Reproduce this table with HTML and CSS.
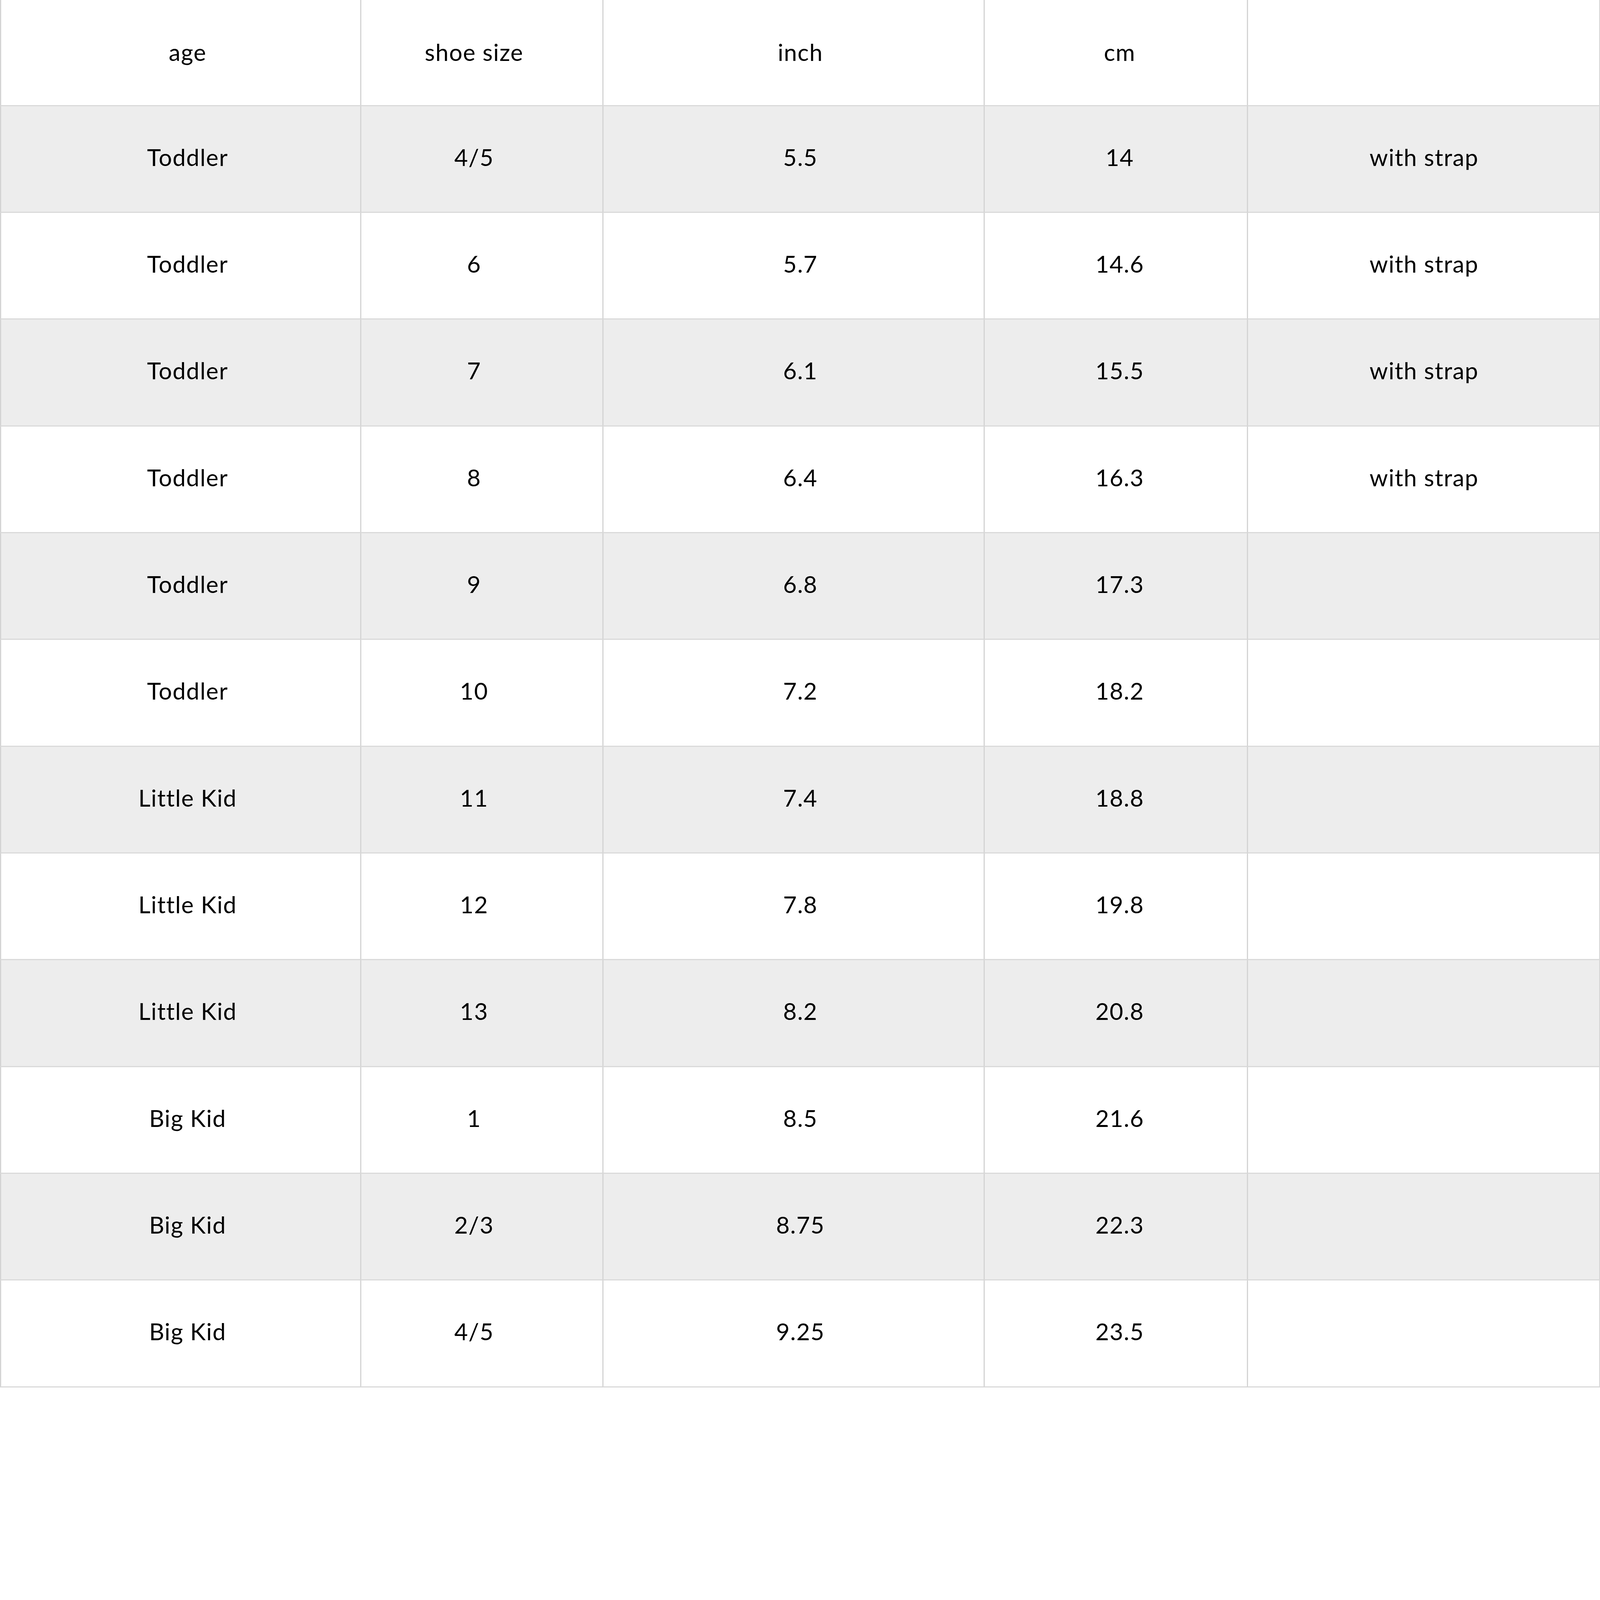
FILE: index.html
```html
<!DOCTYPE html>
<html lang="en">
<head>
<meta charset="utf-8">
<title>Size chart</title>
<link rel="stylesheet" href="styles.css">
</head>
<body>
<div class="chart" role="table">
  <div class="row head" role="row">
    <div class="cell c1" role="columnheader">age</div>
    <div class="cell c2" role="columnheader">shoe size</div>
    <div class="cell c3" role="columnheader">inch</div>
    <div class="cell c4" role="columnheader">cm</div>
    <div class="cell c5" role="columnheader"></div>
  </div>
  <div class="row alt" role="row">
    <div class="cell c1" role="cell">Toddler</div><div class="cell c2" role="cell">4/5</div><div class="cell c3" role="cell">5.5</div><div class="cell c4" role="cell">14</div><div class="cell c5" role="cell">with strap</div>
  </div>
  <div class="row" role="row">
    <div class="cell c1" role="cell">Toddler</div><div class="cell c2" role="cell">6</div><div class="cell c3" role="cell">5.7</div><div class="cell c4" role="cell">14.6</div><div class="cell c5" role="cell">with strap</div>
  </div>
  <div class="row alt" role="row">
    <div class="cell c1" role="cell">Toddler</div><div class="cell c2" role="cell">7</div><div class="cell c3" role="cell">6.1</div><div class="cell c4" role="cell">15.5</div><div class="cell c5" role="cell">with strap</div>
  </div>
  <div class="row" role="row">
    <div class="cell c1" role="cell">Toddler</div><div class="cell c2" role="cell">8</div><div class="cell c3" role="cell">6.4</div><div class="cell c4" role="cell">16.3</div><div class="cell c5" role="cell">with strap</div>
  </div>
  <div class="row alt" role="row">
    <div class="cell c1" role="cell">Toddler</div><div class="cell c2" role="cell">9</div><div class="cell c3" role="cell">6.8</div><div class="cell c4" role="cell">17.3</div><div class="cell c5" role="cell"></div>
  </div>
  <div class="row" role="row">
    <div class="cell c1" role="cell">Toddler</div><div class="cell c2" role="cell">10</div><div class="cell c3" role="cell">7.2</div><div class="cell c4" role="cell">18.2</div><div class="cell c5" role="cell"></div>
  </div>
  <div class="row alt" role="row">
    <div class="cell c1" role="cell">Little Kid</div><div class="cell c2" role="cell">11</div><div class="cell c3" role="cell">7.4</div><div class="cell c4" role="cell">18.8</div><div class="cell c5" role="cell"></div>
  </div>
  <div class="row" role="row">
    <div class="cell c1" role="cell">Little Kid</div><div class="cell c2" role="cell">12</div><div class="cell c3" role="cell">7.8</div><div class="cell c4" role="cell">19.8</div><div class="cell c5" role="cell"></div>
  </div>
  <div class="row alt" role="row">
    <div class="cell c1" role="cell">Little Kid</div><div class="cell c2" role="cell">13</div><div class="cell c3" role="cell">8.2</div><div class="cell c4" role="cell">20.8</div><div class="cell c5" role="cell"></div>
  </div>
  <div class="row" role="row">
    <div class="cell c1" role="cell">Big Kid</div><div class="cell c2" role="cell">1</div><div class="cell c3" role="cell">8.5</div><div class="cell c4" role="cell">21.6</div><div class="cell c5" role="cell"></div>
  </div>
  <div class="row alt" role="row">
    <div class="cell c1" role="cell">Big Kid</div><div class="cell c2" role="cell">2/3</div><div class="cell c3" role="cell">8.75</div><div class="cell c4" role="cell">22.3</div><div class="cell c5" role="cell"></div>
  </div>
  <div class="row" role="row">
    <div class="cell c1" role="cell">Big Kid</div><div class="cell c2" role="cell">4/5</div><div class="cell c3" role="cell">9.25</div><div class="cell c4" role="cell">23.5</div><div class="cell c5" role="cell"></div>
  </div>
</div>
</body>
</html>
```
FILE: styles.css
```css
html, body {
  margin: 0;
  padding: 0;
  background: #ffffff;
}

.chart {
  width: 4096.667px;
  font-family: "Lato", "Noto Sans", sans-serif;
  font-size: 60px;
  letter-spacing: 1.5px;
  color: #000000;
  line-height: 1;
}

.row {
  display: grid;
  grid-template-columns: 921.667px 620px 976.667px 673.333px 905px;
  height: 273.333px;
  background: #ffffff;
}

.row.head {
  height: 271.667px;
}

.row.alt {
  background: #ededed;
}

.cell {
  box-sizing: border-box;
  display: flex;
  align-items: center;
  justify-content: center;
  border-left: 3.34px solid #d4d4d4;
  border-bottom: 3.34px solid #dadada;
  padding-bottom: 10px;
  white-space: nowrap;
}

.head .cell {
  padding-bottom: 2px;
}

.c1 { padding-left: 36px; }
.c2 { padding-right: 39px; }
.c3 { padding-left: 35px; }
.c4 { padding-left: 20px; }
.c5 {
  padding-left: 3px;
  border-right: 3.34px solid #d4d4d4;
}
```
